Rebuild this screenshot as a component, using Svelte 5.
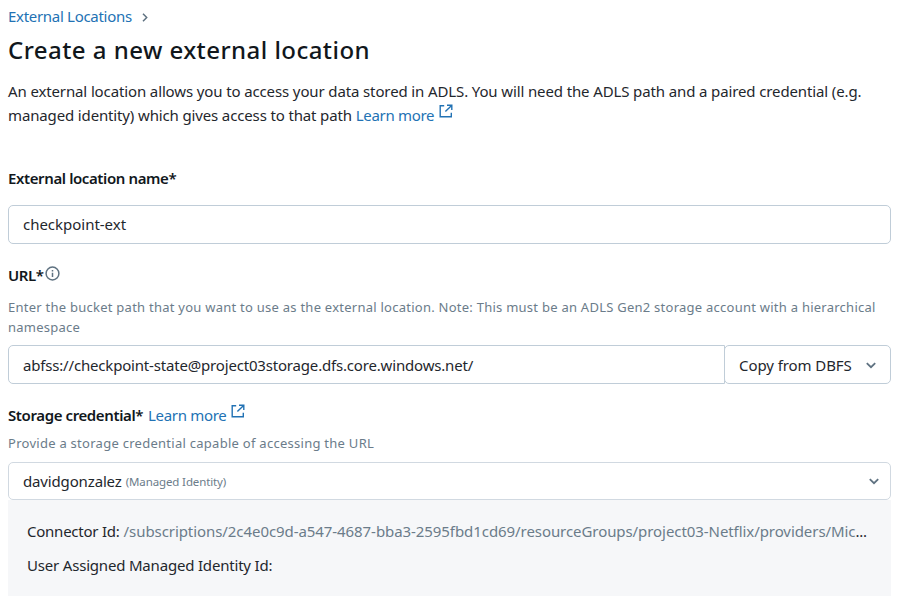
<script>
  const name = 'checkpoint-ext';
  const url = 'abfss://checkpoint-state@project03storage.dfs.core.windows.net/';
  const connector = '/subscriptions/2c4e0c9d-a547-4687-bba3-2595fbd1cd69/resourceGroups/project03-Netflix/providers/Mic';
</script>

{#snippet external()}
  <svg class="ext" width="14" height="14" viewBox="0 0 14 14" fill="none" stroke="currentColor" stroke-width="1.4">
    <path d="M5.2 1.7H1.2V12.8H12.3V8.7M8 1.2H12.8V6M12.6 1.4L6.4 7.6" />
  </svg>
{/snippet}

{#snippet chevron()}
  <svg class="chev" width="10" height="7" viewBox="0 0 10 7" fill="none" stroke="#5f7281" stroke-width="1.8">
    <path d="M.8 1.2L5 5.2L9.2 1.2" />
  </svg>
{/snippet}

<main>
  <nav>
    <a href="#locations">External Locations</a>
    <svg width="6" height="9" viewBox="0 0 6 9" fill="none" stroke="#5f7281" stroke-width="1.5"><path d="M1 .8L4.7 4.5L1 8.2" /></svg>
  </nav>
  <h1>Create a new external location</h1>
  <div class="desc">
    <div class="d1">An external location allows you to access your data stored in ADLS. You will need the ADLS path and a paired credential (e.g.</div>
    <div class="d2">managed identity) which gives access to that path <a href="#learn">Learn more{@render external()}</a></div>
  </div>

  <div class="label l1">External location name*</div>
  <div class="field"><span class="name">{name}</span></div>

  <div class="label l2">
    <span class="url-label">URL*</span>
    <svg width="15" height="15" viewBox="0 0 15 15" fill="none" stroke="#5f7281" stroke-width="1.5"><circle cx="7.5" cy="7.5" r="6.4" /><path d="M7.5 6.7V11M7.5 4V5.5" /></svg>
  </div>
  <div class="hint">
    <div>Enter the bucket path that you want to use as the external location. Note: This must be an ADLS Gen2 storage account with a hierarchical</div>
    <div>namespace</div>
  </div>
  <div class="row">
    <div class="field url"><span>{url}</span></div>
    <button><span>Copy from DBFS</span>{@render chevron()}</button>
  </div>

  <div class="label l3"><span>Storage credential*</span><a href="#credentials">Learn more{@render external()}</a></div>
  <div class="hint h2l">Provide a storage credential capable of accessing the URL</div>
  <div class="field select">
    <span class="user">davidgonzalez</span><span class="kind">(Managed Identity)</span>
    {@render chevron()}
  </div>
  <section>
    <div class="conn"><span class="key">Connector Id:</span><span class="path">{connector}</span><span class="dots">...</span></div>
    <div class="identity">User Assigned Managed Identity Id:</div>
  </section>
</main>

<style>
  :global(body) { background: #fff; }
  main {
    box-sizing: border-box;
    width: 903px;
    height: 604px;
    overflow: hidden;
    padding: 4px 12px 0 8px;
    font: 15px/24px "Noto Sans", "Open Sans", sans-serif;
    color: #1f272d;
    white-space: nowrap;
  }
  a { color: #2272b4; text-decoration: none; letter-spacing: -0.3px; }
  nav { display: flex; align-items: center; height: 24px; gap: 10px; }
  nav svg { position: relative; top: 1px; }
  h1 { margin: 6px 0 0; font-size: 24px; line-height: 32px; font-weight: 500; letter-spacing: 0.45px; color: #11171c; }
  .desc { margin-top: 13px; }
  .d1 { letter-spacing: -0.125px; }
  .d2 { letter-spacing: -0.14px; }
  .ext { margin-left: 5px; position: relative; top: -3px; }
  .label { display: flex; align-items: center; height: 24px; font-weight: 600; color: #11171c; letter-spacing: -0.39px; }
  .label a { font-weight: 400; letter-spacing: -0.32px; }
  .l1 { margin: 39px 0 15px; }
  .l2 { margin-top: 19px; gap: 1px; }
  .l2 svg { position: relative; top: -2px; }
  .l3 { margin-top: 19px; gap: 5px; }
  .field {
    box-sizing: border-box;
    display: flex;
    align-items: center;
    height: 39px;
    padding: 0 14px;
    border: 1px solid #c0cdd8;
    border-radius: 5px;
    background: #fff;
  }
  .name { padding-bottom: 2px; letter-spacing: -0.02px; }
  .hint { margin-top: 10px; font-size: 13px; line-height: 20px; letter-spacing: 0.25px; color: #6b7c8a; }
  .row { display: flex; margin-top: 8px; }
  .url { flex: 1; border-radius: 5px 0 0 5px; letter-spacing: -0.18px; }
  button {
    box-sizing: border-box;
    display: flex;
    align-items: center;
    justify-content: space-between;
    width: 167px;
    height: 39px;
    margin-left: -1px;
    padding: 0 14px;
    border: 1px solid #c0cdd8;
    border-radius: 5px;
    background: #fff;
    font: inherit;
    color: inherit;
    letter-spacing: -0.08px;
  }
  button .chev { position: relative; top: 1px; }
  .h2l { margin-top: 6px; letter-spacing: 0.27px; }
  .select { height: 38px; margin-top: 9px; padding-right: 11px; border-color: #d1d9e1; }
  .user { letter-spacing: -0.15px; }
  .kind { margin-left: 4px; font-size: 11.5px; letter-spacing: -0.12px; color: #6b7c8a; position: relative; top: 1px; }
  .select .chev { margin-left: auto; }
  section { height: 96px; box-sizing: border-box; padding: 19px 19px 0; background: #f6f7f9; }
  .conn { display: flex; }
  .key { letter-spacing: -0.24px; }
  .path { margin-left: 4px; letter-spacing: -0.07px; color: #6b7c8a; }
  .dots { letter-spacing: -0.2px; }
  .identity { margin-top: 10px; letter-spacing: -0.19px; }
</style>
